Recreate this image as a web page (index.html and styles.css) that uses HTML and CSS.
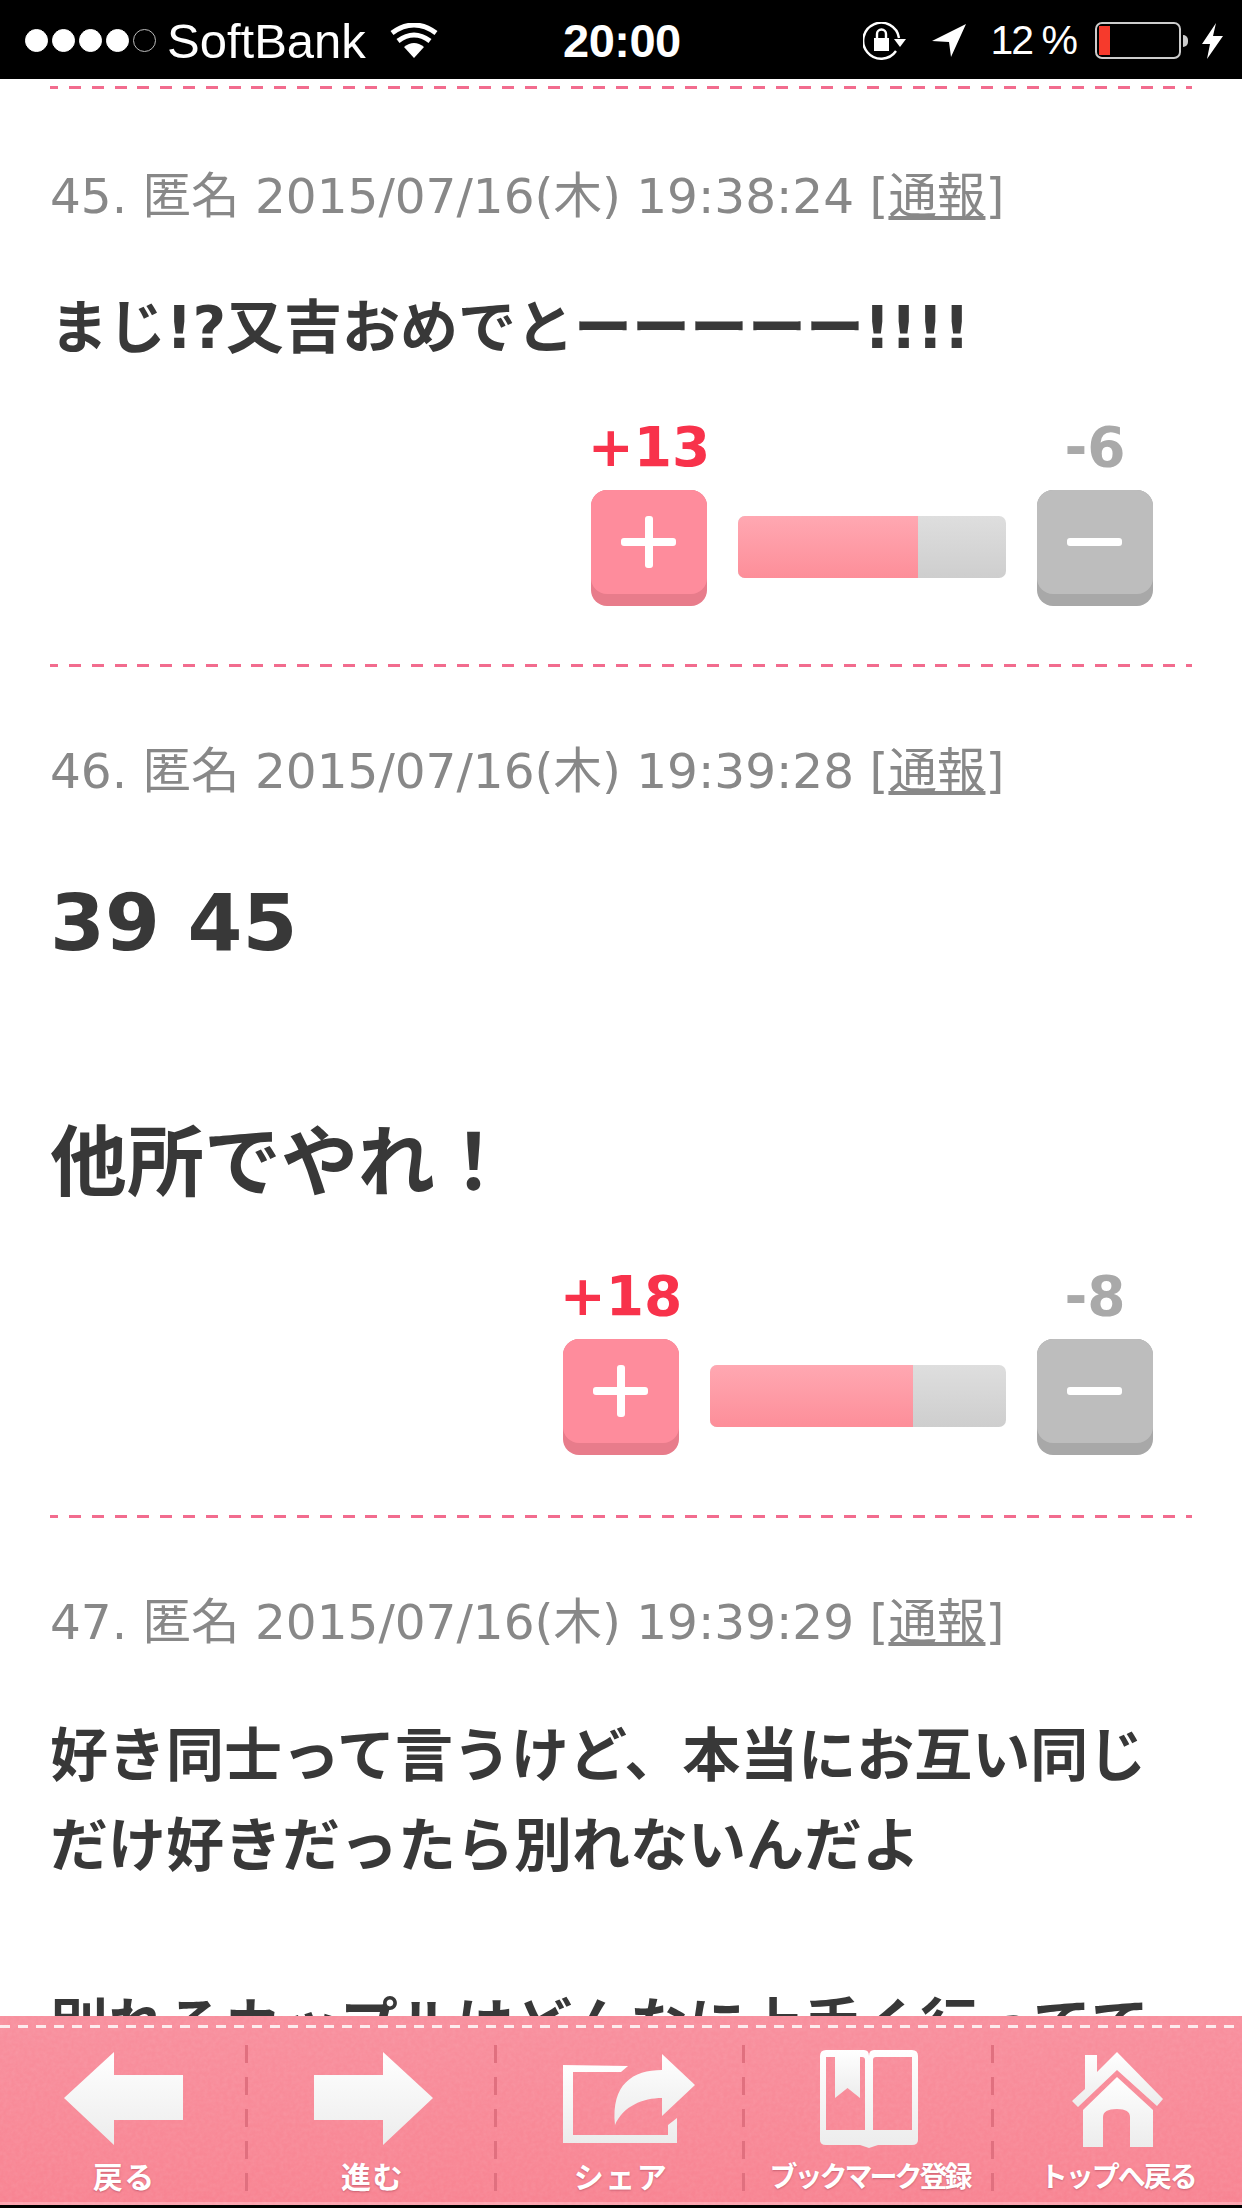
FILE: index.html
```html
<!DOCTYPE html>
<html lang="ja">
<head>
    <meta charset="UTF-8">
    <meta name="viewport" content="width=device-width, initial-scale=1.0">
    <title>コメント</title>
    <link rel="stylesheet" href="styles.css">
</head>
<body>

    <div class="status-bar">
        <div class="status-left">
            <span class="signal"><i></i><i></i><i></i><i></i><i class="off"></i></span>
            <span class="carrier">SoftBank</span>
            <svg class="wifi" width="48" height="35" viewBox="0 0 48 35">
                <path d="M24 35 L14 24 Q24 16 34 24 Z" fill="#fff"/>
                <path d="M8 18 Q24 6 40 18" fill="none" stroke="#fff" stroke-width="5"/>
                <path d="M2 10 Q24 -6 46 10" fill="none" stroke="#fff" stroke-width="5"/>
            </svg>
        </div>
        <div class="status-time">20:00</div>
        <div class="status-right">
            <svg class="lock" width="43" height="38" viewBox="0 0 43 38">
                <path d="M36 16 A18 18 0 1 0 33 29" fill="none" stroke="#fff" stroke-width="2.4"/>
                <path d="M31 17 L43 17 L37 25 Z" fill="#fff"/>
                <rect x="11" y="16" width="15" height="13" fill="#fff"/>
                <path d="M14 16 V12 A4.5 4.5 0 0 1 23 12 V16" fill="none" stroke="#fff" stroke-width="2.4"/>
            </svg>
            <svg class="arrow-loc" width="34" height="33" viewBox="0 0 34 33">
                <path d="M0 17 L34 0 L19 33 L17 18 Z" fill="#fff"/>
            </svg>
            <span class="battery-text">12 %</span>
            <span class="battery"><span class="battery-level"></span></span>
            <span class="battery-tip"></span>
            <svg class="bolt" width="21" height="36" viewBox="0 0 21 36">
                <path d="M14 0 L0 21 L8 21 L5 36 L21 13 L11 13 Z" fill="#fff"/>
            </svg>
        </div>
    </div>

    <div class="comments">
        <div class="comment first">
            <p class="meta">45. 匿名 2015/07/16(木) 19:38:24 [<u>通報</u>]</p>
            <p class="body">まじ!?又吉おめでとーーーーー!!!!</p>
            <div class="vote">
                <div class="vote-btn">
                    <span class="count plus">+13</span>
                    <span class="btn btn-plus"><b class="bar-h"></b><b class="bar-v"></b></span>
                </div>
                <div class="meter short"><div class="meter-fill" style="width: 67%"></div></div>
                <div class="vote-btn">
                    <span class="count minus">-6</span>
                    <span class="btn btn-minus"><b class="bar-h"></b></span>
                </div>
            </div>
        </div>

        <div class="comment second">
            <p class="meta">46. 匿名 2015/07/16(木) 19:39:28 [<u>通報</u>]</p>
            <p class="big-num">39 45</p>
            <p class="big-text">他所でやれ！</p>
            <div class="vote">
                <div class="vote-btn">
                    <span class="count plus">+18</span>
                    <span class="btn btn-plus"><b class="bar-h"></b><b class="bar-v"></b></span>
                </div>
                <div class="meter"><div class="meter-fill" style="width: 68.5%"></div></div>
                <div class="vote-btn">
                    <span class="count minus">-8</span>
                    <span class="btn btn-minus"><b class="bar-h"></b></span>
                </div>
            </div>
        </div>

        <div class="comment third">
            <p class="meta">47. 匿名 2015/07/16(木) 19:39:29 [<u>通報</u>]</p>
            <p class="body">好き同士って言うけど、本当にお互い同じ<br>だけ好きだったら別れないんだよ<br><br>別れるカップルはどんなに上手く行ってて</p>
        </div>
    </div>

    <div class="tab-bar">
        <svg class="grain" width="1242" height="189">
            <filter id="n"><feTurbulence type="fractalNoise" baseFrequency="0.25" numOctaves="2"/><feColorMatrix values="0 0 0 0 1  0 0 0 0 1  0 0 0 0 1  0.9 0 0 0 -0.25"/></filter>
            <rect width="1242" height="189" filter="url(#n)"/>
        </svg>
        <div class="tab">
            <div class="tab-icon">
                <svg width="120" height="94" viewBox="0 0 120 94"><defs><linearGradient id="g" x1="0" y1="0" x2="0" y2="1"><stop offset="0" stop-color="#fff"/><stop offset="1" stop-color="#ececec"/></linearGradient></defs><path d="M0 46 L50 0 V23 H119 V68 H50 V93 Z" fill="url(#g)"/></svg>
            </div>
            <span class="tab-label short">戻る</span>
        </div>
        <div class="tab">
            <div class="tab-icon">
                <svg width="120" height="94" viewBox="0 0 120 94"><path d="M120 46 L70 0 V23 H1 V68 H70 V93 Z" fill="url(#g)"/></svg>
            </div>
            <span class="tab-label short">進む</span>
        </div>
        <div class="tab">
            <div class="tab-icon">
                <svg class="icon-share" width="132" height="90" viewBox="0 0 132 90">
                    <path d="M0 11 L65 12 L58 18 H10 V81 H105 V71 L114 64 V89 H0 Z" fill="url(#g)"/>
                    <path d="M52 71 C48 30 70 16 99 16 V0 L132 31 L99 62 V44 C80 44 60 52 52 71 Z" fill="url(#g)"/>
                </svg>
            </div>
            <span class="tab-label short">シェア</span>
        </div>
        <div class="tab">
            <div class="tab-icon">
                <svg width="98" height="98" viewBox="0 0 98 98">
                    <path d="M6 0 H44 Q49 0 49 6 Q49 0 54 0 H92 Q98 0 98 6 V90 Q98 95 92 95 H58 L49 98 L40 95 H6 Q0 95 0 90 V6 Q0 0 6 0 Z M6 7 V80 H45 V10 Q45 7 42 7 Z M53 10 V80 H92 V7 H56 Q53 7 53 10 Z" fill="url(#g)" fill-rule="evenodd"/>
                    <path d="M15 0 H40 V48 L27.5 38 L15 48 Z" fill="url(#g)"/>
                </svg>
            </div>
            <span class="tab-label squeezed">ブックマーク登録</span>
        </div>
        <div class="tab">
            <div class="tab-icon">
                <svg width="91" height="95" viewBox="0 0 91 95">
                    <path d="M45 0 L91 47 L85 54 L45 18 L6 55 L0 49 L13 37 V3 H25 V20 Z" fill="url(#g)"/>
                    <path d="M45 25 L81 58 V95 H58 V65 Q58 57 45 57 Q31 57 31 65 V95 H11 V58 Z" fill="url(#g)"/>
                </svg>
            </div>
            <span class="tab-label long">トップへ戻る</span>
        </div>
    </div>

</body>
</html>
```

FILE: styles.css
```css
html, body {
    margin: 0;
    padding: 0;
}
body {
    width: 1242px;
    height: 2208px;
    overflow: hidden;
    position: relative;
    background-color: #fff;
    font-family: "DejaVu Sans", "Noto Sans CJK JP", sans-serif;
}
p {
    margin: 0;
}

/* status bar */
.status-bar {
    height: 79px;
    box-sizing: border-box;
    background-color: #000;
    color: #fff;
    display: flex;
    align-items: center;
    justify-content: space-between;
    padding: 2px 19px 0 25px;
    font-family: "Liberation Sans", sans-serif;
    position: relative;
}
.status-left, .status-right {
    display: flex;
    align-items: center;
}
.signal {
    display: flex;
    gap: 4px;
    margin-right: 11px;
}
.signal i {
    width: 23px;
    height: 23px;
    border-radius: 50%;
    background-color: #fff;
    border: 1px solid #fff;
    box-sizing: border-box;
}
.signal i.off {
    background: none;
    border-color: #bbb;
}
.carrier {
    font-size: 49px;
}
.wifi {
    margin-left: 24px;
}
.status-time {
    position: absolute;
    left: 563px;
    font-size: 47px;
    font-weight: bold;
    letter-spacing: -0.5px;
}
.lock {
    margin-right: 26px;
}
.arrow-loc {
    margin-right: 25px;
}
.battery-text {
    font-size: 41px;
    letter-spacing: -2px;
    margin-right: 19px;
    white-space: pre;
}
.battery {
    width: 86px;
    height: 37px;
    border: 2px solid #ccc;
    border-radius: 7px;
    box-sizing: border-box;
    padding: 2px;
    display: block;
}
.battery-level {
    display: block;
    width: 11px;
    height: 100%;
    background-color: #f63a2c;
}
.battery-tip {
    width: 5px;
    height: 12px;
    background-color: #ccc;
    border-radius: 0 5px 5px 0;
    margin: 0 14px 0 2px;
}

/* comments */
.comments {
    padding: 0 50px;
}
.comment {
    padding-top: 3px;
    background: repeating-linear-gradient(to right, #f26c8e 0 8.2px, transparent 8.2px 19px, #f26c8e 19px 22.8px) left top / 100% 3px no-repeat;
}
.comment.first {
    margin-top: 7px;
}
.meta {
    font-size: 48.5px;
    color: #888;
    line-height: 46px;
    white-space: nowrap;
}
.first .meta {
    padding-top: 84px;
}
.second .meta {
    padding-top: 81px;
}
.third .meta {
    padding-top: 81px;
}
.body {
    font-weight: bold;
    font-size: 58px;
    line-height: 90px;
    color: #383838;
    white-space: nowrap;
}
.first .body {
    padding-top: 64px;
}
.third .body {
    padding-top: 66px;
}
.big-num {
    font-weight: bold;
    font-size: 79px;
    line-height: 100px;
    color: #383838;
    padding-top: 79px;
}
.big-text {
    font-weight: bold;
    font-size: 77px;
    line-height: 100px;
    color: #383838;
    padding-top: 141px;
}
.vote {
    display: flex;
    justify-content: flex-end;
    align-items: flex-end;
    gap: 31px;
    padding-right: 39px;
    padding-bottom: 58px;
}
.first .vote {
    padding-top: 45px;
}
.second .vote {
    padding-top: 53px;
    padding-bottom: 60px;
}
.vote-btn {
    display: flex;
    flex-direction: column;
    align-items: center;
    width: 116px;
}
.count {
    font-weight: bold;
    font-size: 55px;
    line-height: 58px;
    margin-bottom: 14px;
    white-space: nowrap;
}
.count.plus {
    color: #f8324b;
}
.count.minus {
    color: #a9a9a9;
}
.btn {
    display: block;
    width: 116px;
    height: 116px;
    border-radius: 16px;
    position: relative;
}
.btn::before {
    content: "";
    position: absolute;
    left: 0;
    right: 0;
    top: 0;
    bottom: 12px;
    border-radius: 16px;
}
.btn-plus {
    background-color: #e87c8b;
}
.btn-plus::before {
    background-color: #fe8c9c;
}
.btn-minus {
    background-color: #a8a8a8;
}
.btn-minus::before {
    background-color: #bdbdbd;
}
.bar-h, .bar-v {
    position: absolute;
    background-color: #fff;
    border-radius: 3px;
}
.bar-h {
    left: 30px;
    top: 48px;
    width: 55px;
    height: 8px;
}
.bar-v {
    left: 54px;
    top: 26px;
    width: 8px;
    height: 52px;
}
.meter {
    width: 296px;
    height: 62px;
    margin-bottom: 28px;
    border-radius: 7px;
    overflow: hidden;
    background: linear-gradient(#dedede, #cecece);
}
.meter.short {
    width: 268px;
}
.meter-fill {
    height: 100%;
    background: linear-gradient(#ffa8b2, #fd8e99);
}

/* bottom bar */
.tab-bar {
    position: absolute;
    left: 0;
    right: 0;
    top: 2016px;
    height: 189px;
    border-bottom: 3px solid #000;
    background: linear-gradient(#f8909e, #f88492);
    box-shadow: inset 0 -3px 0 #fba3ae;
    display: flex;
}
.grain {
    position: absolute;
    left: 0;
    top: 0;
    opacity: 0.12;
}
.tab-bar::before {
    content: "";
    position: absolute;
    left: 0;
    right: 0;
    top: 9px;
    height: 3px;
    background: repeating-linear-gradient(to right, #fdeaec 0 10px, transparent 10px 18px);
}
.tab {
    flex: 1;
    position: relative;
    margin-top: 29px;
    height: 150px;
    padding-top: 3px;
    box-sizing: border-box;
    background: repeating-linear-gradient(to bottom, #e0707f 0 18px, transparent 18px 32px) right top / 3px 100% no-repeat;
    display: flex;
    flex-direction: column;
    align-items: center;
}
.tab:last-child {
    background: none;
}
.tab-icon {
    height: 102px;
    display: flex;
    align-items: center;
    margin-bottom: 5px;
}
.icon-share {
    margin-left: 16px;
}
.tab-label {
    color: #fff;
    font-family: "Noto Sans CJK JP", sans-serif;
    font-weight: bold;
    line-height: 40px;
    white-space: nowrap;
    text-shadow: 0 1px 2px rgba(170, 70, 90, 0.6);
}
.tab-label.short {
    font-size: 30px;
    letter-spacing: 1.5px;
}
.tab-label.squeezed {
    font-size: 28px;
    letter-spacing: -3px;
}
.tab-label.long {
    font-size: 28px;
    letter-spacing: -2px;
}
```
